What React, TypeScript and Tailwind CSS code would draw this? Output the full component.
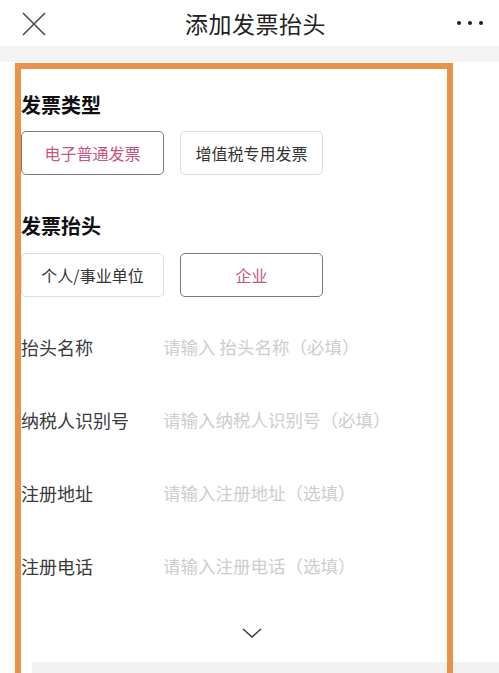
import React from "react";

const font = {
  fontFamily: '"Noto Sans CJK SC", "Noto Sans", sans-serif',
};

function OptionButton({ label, active }: { label: string; active?: boolean }) {
  return (
    <div
      className={
        "w-[143px] h-[44px] rounded-[5px] flex items-center justify-center text-[16px] bg-white " +
        (active
          ? "border-[1.5px] border-[#7a7a7a] text-[#c4567f]"
          : "border border-[#dcdcdc] text-[#333]")
      }
    >
      {label}
    </div>
  );
}

function FieldRow({ label, placeholder }: { label: string; placeholder: string }) {
  return (
    <div className="h-[73px] flex items-center">
      <div className="w-[142px] text-[18px] text-[#3a3a3a]">{label}</div>
      <div className="text-[17.5px] text-[#cdcdcd]">{placeholder}</div>
    </div>
  );
}

export default function App() {
  return (
    <div className="w-[499px] h-[673px] overflow-hidden bg-white relative" style={font}>
      {/* top bar */}
      <header className="h-[46px] flex items-center justify-between px-[22px] bg-white">
        <svg width="24" height="24" viewBox="0 0 24 24" className="mt-[1px]">
          <path d="M1 1 L23 23 M23 1 L1 23" stroke="#4a4a4a" strokeWidth="1.6" fill="none" />
        </svg>
        <div className="text-[23px] text-[#222] leading-none tracking-[0.5px] ml-[8px]">添加发票抬头</div>
        <div className="flex gap-[7px] items-center mr-[-6px]">
          <span className="w-[4px] h-[4px] rounded-full bg-[#222]" />
          <span className="w-[4px] h-[4px] rounded-full bg-[#222]" />
          <span className="w-[4px] h-[4px] rounded-full bg-[#222]" />
        </div>
      </header>
      <div className="h-[16px] bg-[#f4f4f4]" />

      <main className="relative pl-[21px] pt-[29px]">
        <h2 className="text-[20px] font-bold text-[#111] leading-[28px]">发票类型</h2>
        <div className="flex gap-[16px] mt-[12px]">
          <OptionButton label="电子普通发票" active />
          <OptionButton label="增值税专用发票" />
        </div>

        <h2 className="text-[20px] font-bold text-[#111] leading-[28px] mt-[37px]">发票抬头</h2>
        <div className="flex gap-[16px] mt-[13px]">
          <OptionButton label="个人/事业单位" />
          <OptionButton label="企业" active />
        </div>

        <div className="mt-[14px]">
          <FieldRow label="抬头名称" placeholder="请输入 抬头名称（必填）" />
          <FieldRow label="纳税人识别号" placeholder="请输入纳税人识别号（必填）" />
          <FieldRow label="注册地址" placeholder="请输入注册地址（选填）" />
          <FieldRow label="注册电话" placeholder="请输入注册电话（选填）" />
        </div>

        <div className="h-[59px] flex items-center justify-center pr-[16px]">
          <svg width="20" height="10" viewBox="0 0 20 10">
            <path d="M1 1 L10 9 L19 1" stroke="#444" strokeWidth="1.6" fill="none" />
          </svg>
        </div>

        <div className="h-[40px] bg-[#f2f2f2] ml-[11px]" />

        {/* highlight frame */}
        <div className="absolute left-[15px] top-[1px] w-[438px] h-[700px] border-[6px] border-[#e8924a] pointer-events-none" />
      </main>
    </div>
  );
}
